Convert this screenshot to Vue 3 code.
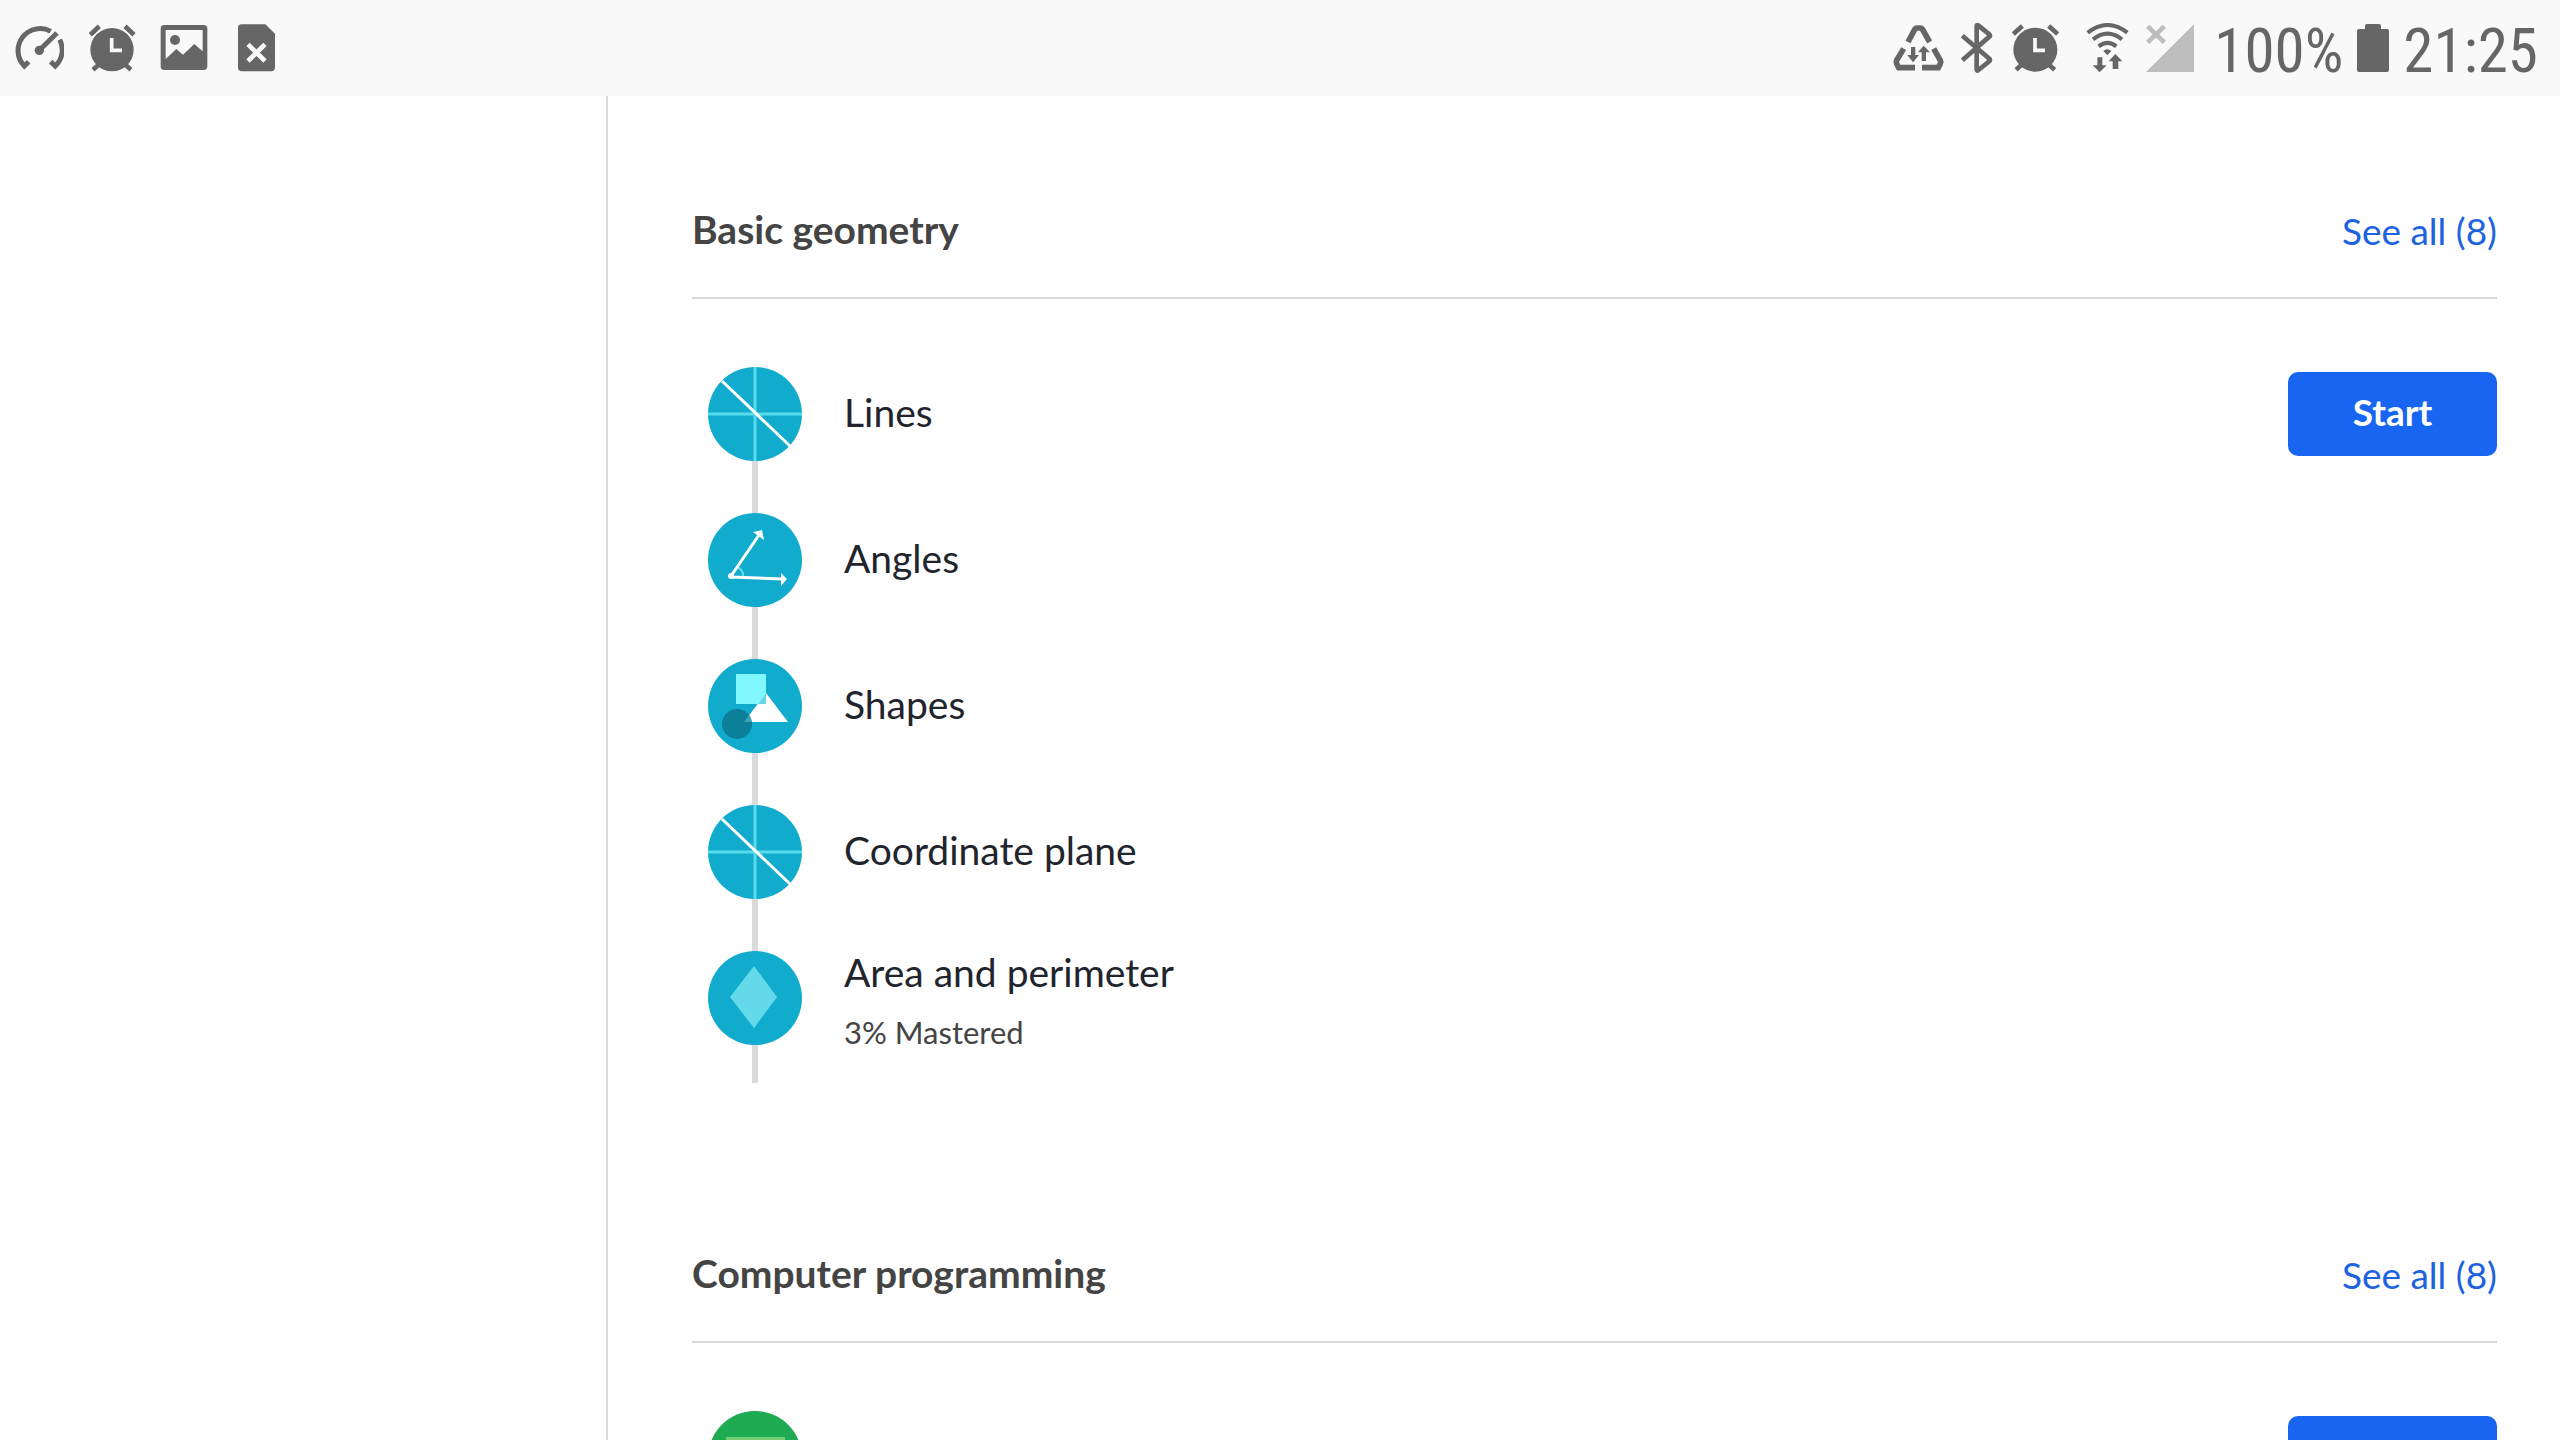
<script setup>
const geometry = [
  { name: 'Lines', icon: 'plane', action: true, actionText: 'Start' },
  { name: 'Angles', icon: 'angle' },
  { name: 'Shapes', icon: 'shapes' },
  { name: 'Coordinate plane', icon: 'plane' },
  { name: 'Area and perimeter', icon: 'diamond', note: '3% Mastered' },
]
const sections = [
  { title: 'Basic geometry', count: 8, units: geometry },
  { title: 'Computer programming', count: 8, units: [{ name: '', icon: 'code', action: true }] },
]
</script>

<template>
  <div class="screen">
    <header class="status">
      <div class="group left">
        <svg width="50" height="50" viewBox="42 72 150 150">
          <g fill="none" stroke="#666" stroke-width="15">
            <path d="M86 188L73 201A66 66 0 0 1 152 97" />
            <path d="M179 122A66 66 0 0 1 166 201L152 188" />
            <path d="M118 154L171 102" />
          </g>
          <circle cx="118" cy="154" r="14" fill="#666" />
        </svg>
        <svg width="50" height="50" viewBox="264 72 150 150">
          <circle cx="336" cy="152" r="65" fill="#666" />
          <path d="M271 107L298 82M375 82L402 107M279 212L302 192M393 212L370 192" stroke="#666" stroke-width="14" />
          <path d="M335 117V154H366" fill="none" stroke="#f9f9f9" stroke-width="11" />
        </svg>
        <svg width="50" height="50" viewBox="486 72 150 150" overflow="visible">
          <rect x="482" y="78" width="140" height="135" rx="11" fill="#666" />
          <path d="M497 93H608V157L583 135L549 167L529 150L497 180Z" fill="#f9f9f9" />
          <circle cx="525" cy="123" r="15" fill="#666" />
        </svg>
        <svg width="50" height="50" viewBox="708 72 150 150">
          <path d="M725 76H796L825 104V205Q825 217 813 217H725Q714 217 714 205V87Q714 76 725 76Z" fill="#666" />
          <path d="M744 136L795 186M795 136L744 186" stroke="#f9f9f9" stroke-width="14" />
        </svg>
      </div>

      <div class="group right">
        <svg width="54" height="50" viewBox="39 72 162 150">
          <g fill="none" stroke="#666" stroke-width="17">
            <path d="M87 129L108 90Q110 87 114 87H124Q128 87 130 90L152 129" />
            <path d="M74 149L53 184Q51 189 53 194L59 206H108" />
            <path d="M164 149L184 184Q187 189 184 194L178 206H129" />
          </g>
          <path d="M96 144H109V168H120L102 190L85 168H96ZM128 186H141V160H153L134 140L117 160H128Z" fill="#666" />
        </svg>
        <svg width="34" height="50" viewBox="243 72 102 150">
          <path d="M250 110L332 180Q334 184 331 187L297 214Q293 216 293 211V81Q293 77 297 79L331 106Q334 109 332 112L250 184" fill="none" stroke="#666" stroke-width="14" />
        </svg>
        <svg width="58" height="50" viewBox="387 72 174 150">
          <circle cx="469" cy="152" r="66" fill="#666" />
          <path d="M403 105L430 81M509 81L536 105M411 212L434 192M527 212L504 192" stroke="#666" stroke-width="14" />
          <path d="M468 117V154H498" fill="none" stroke="#f9f9f9" stroke-width="11" />
        </svg>
        <svg width="52" height="50" viewBox="603 72 156 150">
          <g fill="none" stroke="#666" stroke-width="12">
            <path d="M626 101Q686 55 745 101" />
            <path d="M642 121Q686 87 729 121" />
            <path d="M659 142Q686 121 712 142" />
          </g>
          <path d="M673 156Q685 145 697 156L685 169ZM655 175H670V199H683L662 220L641 199H655ZM701 210H718V187H730L709 165L689 187H701Z" fill="#666" />
        </svg>
        <svg class="signal" width="50" height="50" viewBox="801 72 150 150">
          <path d="M945 76V219H801Z" fill="#bdbdbd" />
          <path d="M806 82L856 130M856 82L806 130" stroke="#bdbdbd" stroke-width="14" />
        </svg>
        <span class="digits">100%</span>
        <svg width="32" height="50" viewBox="474 72 96 150">
          <path d="M504 75H540Q546 75 546 81V90H564Q570 90 570 96V213Q570 219 564 219H480Q474 219 474 213V96Q474 90 480 90H498V81Q498 75 504 75Z" fill="#666" />
        </svg>
        <time class="digits">21:25</time>
      </div>
    </header>

    <div class="body">
      <aside class="side"></aside>
      <main class="content">
        <section v-for="s in sections" :key="s.title" class="section">
          <div class="heading">
            <h2>{{ s.title }}</h2>
            <a href="#">See all ({{ s.count }})</a>
          </div>
          <ul class="units">
            <li v-for="(u, i) in s.units" :key="i" class="unit">
              <div class="track">
                <svg width="94" height="94" viewBox="0 0 94 94">
                  <circle cx="47" cy="47" r="47" :fill="u.icon === 'code' ? '#1fab54' : '#11accd'" />
                  <template v-if="u.icon === 'plane'">
                    <path d="M47 0V94M0 47H94" stroke="#58dbec" stroke-width="3" />
                    <path d="M14 14L82 79" stroke="#fff" stroke-width="3" />
                  </template>
                  <template v-else-if="u.icon === 'angle'">
                    <path d="M29 54Q36 57 35 65" fill="none" stroke="#63d9ea" stroke-width="2" />
                    <path d="M23 63L51 22M23 64L74 66" stroke="#fff" stroke-width="3" />
                    <circle cx="23" cy="63" r="3" fill="#fff" />
                    <path d="M45 19L54 17L56 27ZM73 60L79 66L73 73Z" fill="#fff" />
                  </template>
                  <template v-else-if="u.icon === 'shapes'">
                    <rect x="28" y="15" width="30" height="30" fill="#80f6ff" />
                    <path d="M58 34L80 63H36Z" fill="#fff" />
                    <path d="M58 34V45H50Z" fill="#63d9ea" />
                    <circle cx="29" cy="65" r="15" fill="#0c7f99" />
                    <path d="M41 56Q44 59 43 63H36Z" fill="#3fa3b8" />
                  </template>
                  <path v-else-if="u.icon === 'diamond'" d="M46 15L69 46L46 77L22 46Z" fill="#63d9ea" />
                  <rect v-else x="18" y="26" width="59" height="42" fill="#74cf70" />
                </svg>
              </div>
              <div class="label" :class="{ noted: u.note }">
                <span class="name">{{ u.name }}</span>
                <span v-if="u.note" class="note">{{ u.note }}</span>
              </div>
              <button v-if="u.action" type="button">{{ u.actionText }}</button>
            </li>
          </ul>
        </section>
      </main>
    </div>
  </div>
</template>

<style>
html,
body {
  margin: 0;
  background: #fff;
}
</style>

<style scoped>
.screen {
  display: flex;
  flex-direction: column;
  height: 100vh;
  overflow: hidden;
  font-family: Lato, "Open Sans", sans-serif;
  color: #21242c;
}
.status {
  display: flex;
  flex: none;
  justify-content: space-between;
  align-items: center;
  height: 96px;
  padding: 0 22px 0 14px;
  box-sizing: border-box;
  background: #f9f9f9;
}
.group {
  display: flex;
  align-items: center;
}
.left {
  gap: 24px;
}
.right {
  gap: 14px;
}
svg {
  display: block;
  flex: none;
}
.signal {
  margin-right: 4px;
}
.digits {
  padding-top: 5px;
  font-family: "Roboto Condensed", Roboto, sans-serif;
  font-size: 61px;
  line-height: 72px;
  color: #666;
}
.body {
  display: flex;
  flex: 1;
  min-height: 0;
}
.side {
  flex: none;
  width: 606px;
  border-right: 2px solid #dbdbdb;
}
.content {
  flex: 1;
  padding: 96px 63px 0 84px;
  background: #fefefe;
}
.section {
  margin-bottom: 153px;
}
.heading {
  display: flex;
  justify-content: space-between;
  align-items: center;
  height: 105px;
  border-bottom: 2px solid #d8d8d8;
}
h2 {
  margin: 0 0 32px;
  font-size: 39px;
  line-height: 48px;
  font-weight: 700;
  color: #444;
}
a {
  margin-bottom: 27px;
  font-size: 37px;
  line-height: 48px;
  color: #1d63e0;
  text-decoration: none;
}
.units {
  margin: 0;
  padding: 68px 0 0 16px;
  list-style: none;
}
.unit {
  display: flex;
  align-items: flex-start;
}
.track {
  flex: none;
  width: 94px;
  height: 146px;
  background: linear-gradient(#d8dadc, #d8dadc) center / 6px 100% no-repeat;
}
.unit:last-child .track {
  height: 132px;
}
.label {
  display: flex;
  flex: 1;
  flex-direction: column;
  justify-content: center;
  gap: 12px;
  height: 94px;
  margin-left: 42px;
  padding-bottom: 4px;
  box-sizing: border-box;
}
.label.noted {
  padding: 8px 0 0;
}
.name {
  font-size: 39px;
  line-height: 48px;
}
.note {
  font-size: 31px;
  line-height: 48px;
  color: #444;
}
button {
  width: 209px;
  height: 84px;
  margin-top: 5px;
  padding: 0 0 4px;
  border: 0;
  border-radius: 10px;
  background: #1865f2;
  color: #fff;
  font: 700 37px/48px Lato, "Open Sans", sans-serif;
}
</style>
